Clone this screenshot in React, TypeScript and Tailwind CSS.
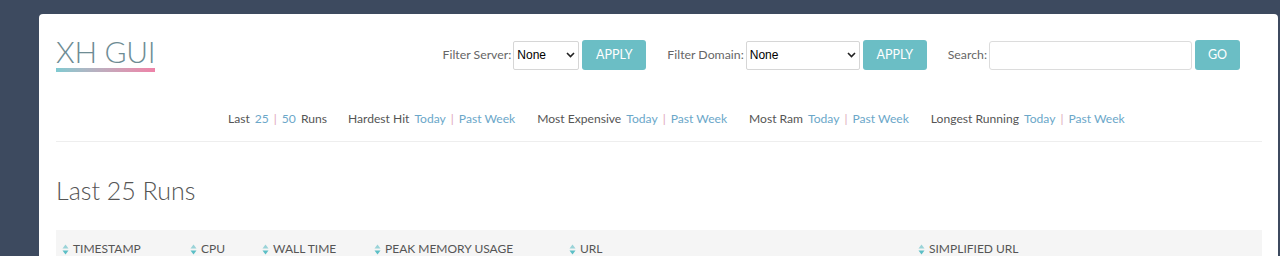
import React from "react";

const Chevron = () => (
  <svg width="9" height="6" viewBox="0 0 9 6" className="shrink-0">
    <path d="M1 1l3.5 3.5L8 1" fill="none" stroke="#222" strokeWidth="1.6" />
  </svg>
);

const SortIcon = () => (
  <svg width="7" height="11" viewBox="0 0 7 11" className="mr-[4px] shrink-0">
    <path d="M3.5 0.5L6.5 4.5H0.5Z" fill="#9ad3d8" />
    <path d="M3.5 10.5L6.5 6.5H0.5Z" fill="#5cbfc6" />
  </svg>
);

const Sep = () => <span className="mx-[5px] text-[#e0a9bb]">|</span>;
const A = ({ children }: { children: React.ReactNode }) => (
  <span className="text-[#6ba7c9]">{children}</span>
);

export default function App() {
  return (
    <div className="min-h-[256px] bg-[#3d4a5f] pt-[14px] pl-[39px] pr-[2px] overflow-hidden" style={{ fontFamily: "Lato, 'Open Sans', sans-serif" }}>
      <div className="bg-white rounded-t-[4px] min-h-[242px] pl-[17px] pr-[16px]">
        <div className="flex items-start pt-[19px] h-[128px] border-b border-[#eeeeee]">
          <div className="flex flex-col w-[99px]">
            <div className="text-[30px] leading-[36px] font-light text-[#6e8c94] tracking-[-0.3px] whitespace-nowrap">XH GUI</div>
            <div className="mt-[-1px] h-[4px] w-[99px] bg-gradient-to-r from-[#7fcad1] to-[#ee82a8]" />
          </div>
          <div className="flex-1 flex flex-col">
            <div className="flex items-center justify-end pr-[22px] pt-[7px] text-[12.3px] text-[#666]">
              <span className="mr-[2px]">Filter Server:</span>
              <div className="w-[66px] h-[29px] border border-[#d6d6d6] rounded-[2px] flex items-center justify-between px-[3px] text-[12px] text-black" style={{ fontFamily: "'Liberation Sans', Arial, sans-serif" }}>
                <span>None</span>
                <Chevron />
              </div>
              <button className="ml-[3px] w-[64px] h-[30px] bg-[#6bbec5] rounded-[3px] text-white text-[12.5px]">APPLY</button>
              <span className="ml-[21px] mr-[2px]">Filter Domain:</span>
              <div className="w-[114px] h-[29px] border border-[#d6d6d6] rounded-[2px] flex items-center justify-between px-[3px] text-[12px] text-black" style={{ fontFamily: "'Liberation Sans', Arial, sans-serif" }}>
                <span>None</span>
                <Chevron />
              </div>
              <button className="ml-[3px] w-[64px] h-[30px] bg-[#6bbec5] rounded-[3px] text-white text-[12.5px]">APPLY</button>
              <span className="ml-[21px] mr-[2px]">Search:</span>
              <div className="w-[203px] h-[29px] border border-[#dcdcdc] rounded-[3px]" />
              <button className="ml-[3px] w-[45px] h-[30px] bg-[#6bbec5] rounded-[3px] text-white text-[12.5px]">GO</button>
            </div>
            <div className="flex items-center pl-[73px] mt-[40px] text-[12.1px] text-[#555] whitespace-nowrap">
              <span>Last<span className="ml-[5px]" /><A>25</A><Sep /><A>50</A><span className="ml-[5px]">Runs</span></span>
              <span className="ml-[21px]">Hardest Hit<span className="ml-[5px]" /><A>Today</A><Sep /><A>Past Week</A></span>
              <span className="ml-[22px]">Most Expensive<span className="ml-[5px]" /><A>Today</A><Sep /><A>Past Week</A></span>
              <span className="ml-[22px]">Most Ram<span className="ml-[5px]" /><A>Today</A><Sep /><A>Past Week</A></span>
              <span className="ml-[22px]">Longest Running<span className="ml-[5px]" /><A>Today</A><Sep /><A>Past Week</A></span>
            </div>
          </div>
        </div>
        <h1 className="mt-[30px] text-[25px] leading-[36px] font-light text-[#555]">Last 25 Runs</h1>
        <div className="mt-[22px] bg-[#f5f5f5] h-[40px] flex items-start pt-[10px] text-[12px] text-[#555] uppercase whitespace-nowrap">
          <div className="w-[134px] pl-[6px] flex items-center"><SortIcon />Timestamp</div>
          <div className="w-[72px] flex items-center"><SortIcon />CPU</div>
          <div className="w-[112px] flex items-center"><SortIcon />Wall Time</div>
          <div className="w-[195px] flex items-center"><SortIcon />Peak Memory Usage</div>
          <div className="w-[349px] flex items-center"><SortIcon />URL</div>
          <div className="flex items-center"><SortIcon />Simplified URL</div>
        </div>
      </div>
    </div>
  );
}
